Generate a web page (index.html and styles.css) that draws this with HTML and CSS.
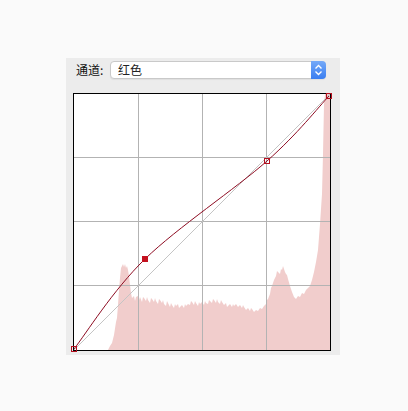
FILE: index.html
```html
<!DOCTYPE html>
<html lang="zh">

<head>
    <meta charset="UTF-8">
    <meta name="viewport" content="width=device-width, initial-scale=1.0">
    <title>曲线</title>
    <link rel="stylesheet" href="styles.css">
</head>

<body>
    <div class="panel">
        <div class="channelRow">
            <span class="label">通道:</span>
            <div class="select">
                <span class="value">红色</span>
                <span class="stepper">
                    <svg width="15" height="18" viewBox="0 0 15 18">
                        <path d="M4.5 7.5 L7.5 4.5 L10.5 7.5" fill="none" stroke="#fff" stroke-width="1.4" />
                        <path d="M4.5 10.5 L7.5 13.5 L10.5 10.5" fill="none" stroke="#fff" stroke-width="1.4" />
                    </svg>
                </span>
            </div>
        </div>

        <div class="graph">
            <svg width="256" height="256" viewBox="0 0 256 256">
                <!-- histogram -->
                <polygon fill="#f1cdcc" points="34,256 36,252 38,249 40,241 42,228 43,224 44,211 45,196 46,184 47,174 48,172 49,170 50,173 51,170 52,174 53,172 54,176 55,182 56,191 57,199 58,204 60,202 61,207 62,203 64,202 65,206 66,203 68,208 69,203 70,204 72,207 73,203 74,206 76,209 77,204 78,205 80,208 81,204 82,207 84,210 85,205 86,206 88,209 89,206 90,210 92,212 93,207 94,209 96,213 97,209 98,211 100,214 101,210 102,212 104,210 105,214 106,213 108,211 110,214 111,210 112,212 114,210 116,211 117,207 118,208 120,211 121,207 122,209 124,212 125,208 126,210 128,208 130,211 131,207 132,209 134,210 135,206 136,207 138,209 139,205 140,206 142,209 143,205 144,208 146,210 147,206 148,208 150,211 152,209 153,213 154,212 156,210 158,213 159,210 160,212 162,210 164,213 166,211 168,214 169,211 170,213 172,216 174,214 176,217 177,214 178,215 180,218 182,216 184,217 186,214 188,215 190,212 192,210 193,206 194,205 196,200 197,194 198,192 200,186 201,184 202,182 203,177 204,178 206,180 207,175 208,176 209,172 210,175 211,178 212,180 213,181 214,185 216,192 218,198 220,203 222,205 224,202 226,203 228,199 230,200 232,196 234,194 236,192 238,186 240,178 242,168 244,156 246,130 248,100 249,60 250,10 251,0 256,0 256,256" />
                <!-- grid -->
                <g stroke="#b3b3b3" stroke-width="1">
                    <line x1="64.5" y1="0" x2="64.5" y2="256" />
                    <line x1="128.5" y1="0" x2="128.5" y2="256" />
                    <line x1="192.5" y1="0" x2="192.5" y2="256" />
                    <line x1="0" y1="63.5" x2="256" y2="63.5" />
                    <line x1="0" y1="127.5" x2="256" y2="127.5" />
                    <line x1="0" y1="191.5" x2="256" y2="191.5" />
                </g>
                <line x1="0" y1="256" x2="256" y2="0" stroke="#c4c4c4" stroke-width="1" />
                <!-- curve -->
                <path d="M0 255 C11.8 240 38.8 196.3 71 165 C103.2 133.7 162.3 94.2 193 67 C223.7 39.8 244.7 12.8 255 2" fill="none" stroke="#8e0c22" stroke-width="1" />
                <!-- points -->
                <rect x="68" y="162" width="6" height="6" fill="#c4111f" />
                <rect x="190.5" y="64.5" width="5" height="5" fill="none" stroke="#b5101f" stroke-width="1" />
                <rect x="-2.5" y="252.5" width="5" height="5" fill="none" stroke="#b5101f" stroke-width="1" />
                <rect x="252.5" y="-0.5" width="5" height="5" fill="none" stroke="#b5101f" stroke-width="1" />
            </svg>
        </div>
    </div>
</body>

</html>
```

FILE: styles.css
```css
body {
    margin: 0;
    background-color: #fafafa;
    font-family: "Noto Sans CJK SC", "Noto Sans", sans-serif;
    color: #222;
}

.panel {
    margin: 58px 0 0 66px;
    width: 267px;
    height: 294px;
    padding: 3px 0 0 7px;
    background-color: #ececec;
}

.channelRow {
    display: flex;
    align-items: center;
    height: 18px;
}

.label {
    margin-left: 3px;
    width: 34px;
    font-size: 12px;
    line-height: 18px;
    color: #111;
}

.select {
    display: flex;
    align-items: center;
    justify-content: space-between;
    box-sizing: border-box;
    width: 216px;
    height: 18px;
    background-color: #fff;
    border: 1px solid #c9c9c9;
    border-radius: 4px;
    box-shadow: 0 1px 1px rgba(0, 0, 0, 0.06);
}

.value {
    padding-left: 7px;
    font-size: 12px;
    line-height: 16px;
}

.stepper {
    display: flex;
    width: 15px;
    height: 18px;
    margin: -1px -1px -1px 0;
    border-radius: 0 4px 4px 0;
    background: linear-gradient(#74a9f8, #3a7ef1);
}

.graph {
    width: 256px;
    height: 256px;
    margin-top: 14px;
    border: 1px solid #000;
    background-color: #fff;
}

.graph svg {
    display: block;
    overflow: visible;
}
```
